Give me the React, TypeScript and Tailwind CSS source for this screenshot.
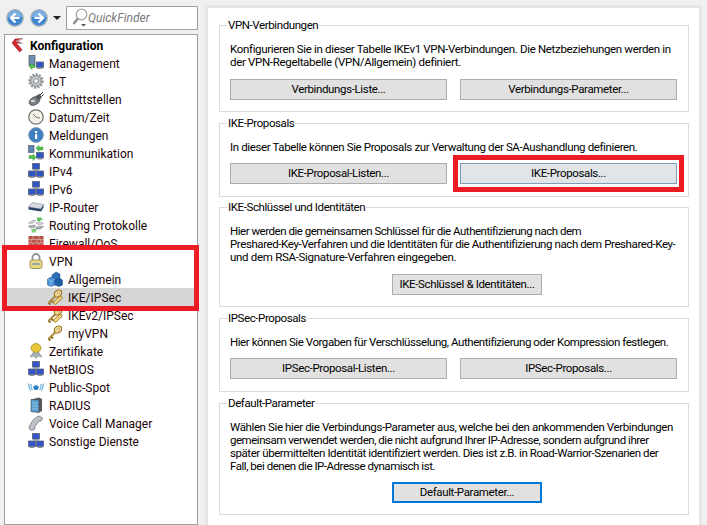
import type { ReactNode } from "react";

// =============================================================================
// Tree icons, 16x16 drawings
// =============================================================================
function Svg({ children, size = 16 }: { children: ReactNode; size?: number }) {
  return (
    <svg width={size} height={size} viewBox="0 0 16 16" className="shrink-0">
      {children}
    </svg>
  );
}

function Pc({ x, y }: { x: number; y: number }) {
  return (
    <g>
      <rect x={x} y={y} width="7" height="5.5" fill="#2f55c8" stroke="#5a6472" strokeWidth="0.8" />
      <rect x={x + 1} y={y + 5.5} width="5" height="1.5" fill="#8a929c" />
    </g>
  );
}

const Network = () => (
  <Svg>
    <Pc x={4.5} y={0.5} />
    <Pc x={0.5} y={8} />
    <Pc x={8.5} y={8} />
  </Svg>
);

const Management = () => (
  <Svg>
    <rect x="1" y="0.5" width="6" height="10" fill="#6f8fb5" stroke="#55606e" strokeWidth="0.8" />
    <Pc x={8.5} y={7} />
    <path d="M1 11 L4 8.5 L4 10 L7 10 L7 12.5 L4 12.5 L4 14.5 Z" fill="#4fc04a" stroke="#2f8a2f" strokeWidth="0.5" />
  </Svg>
);

const Gear = () => (
  <Svg>
    <circle cx="8" cy="8" r="5.4" fill="#c3c6ca" stroke="#7d8288" strokeWidth="1" />
    <circle cx="8" cy="8" r="6.6" fill="none" stroke="#8d9298" strokeWidth="2.2" strokeDasharray="2 1.4" />
    <circle cx="8" cy="8" r="2.4" fill="#f2f3f4" stroke="#777c82" strokeWidth="0.8" />
  </Svg>
);

const Plug = () => (
  <Svg>
    <ellipse cx="6.5" cy="10" rx="5.8" ry="3.8" fill="#7b7f84" stroke="#45484c" strokeWidth="0.7" transform="rotate(-30 6.5 10)" />
    <rect x="8" y="4" width="5" height="4.5" fill="#55595e" transform="rotate(-30 10 6)" />
    <path d="M12 4 L15 1 M13.5 5.5 L15.5 3.5" stroke="#222" strokeWidth="1" />
    <ellipse cx="5" cy="10" rx="2.2" ry="1.3" fill="#d2d4d6" />
  </Svg>
);

const Clock = () => (
  <Svg>
    <circle cx="8" cy="8" r="7.2" fill="#f3f1ea" stroke="#6e6e68" strokeWidth="1.2" />
    <path d="M8 8 L5 5 M8 8 L12 9" stroke="#77776f" strokeWidth="1" fill="none" />
  </Svg>
);

const Info = () => (
  <Svg>
    <circle cx="8" cy="8" r="7.4" fill="#3f7fc4" stroke="#8aa0b4" strokeWidth="1" />
    <rect x="7" y="7" width="2.2" height="5" fill="#fff" />
    <rect x="7" y="4" width="2.2" height="2" fill="#fff" />
  </Svg>
);

const Kommunikation = () => (
  <Svg>
    <rect x="0.5" y="0.5" width="5.5" height="7" fill="#5f84b4" stroke="#55606e" strokeWidth="0.7" />
    <Pc x={8.5} y={7.5} />
    <path d="M8 3 L11 0.5 L11 2 L15 2 L15 5 L11 5 L11 6.5 Z" fill="#4fc04a" stroke="#2f8a2f" strokeWidth="0.4" />
    <path d="M8 12.5 L5 9 L5 10.5 L1 10.5 L1 13.5 L5 13.5 L5 15.5 Z" fill="#4fc04a" stroke="#2f8a2f" strokeWidth="0.4" />
  </Svg>
);

const Router = () => (
  <Svg>
    <path d="M0.5 8 L4 3.5 L15.5 5.5 L13 10 Z" fill="#d6dade" stroke="#8a9096" strokeWidth="0.6" />
    <path d="M0.5 8 L13 10 L15.5 5.5 L15.5 8.5 L13 12.5 L0.5 10.5 Z" fill="#27416b" />
  </Svg>
);

const Routing = () => (
  <Svg>
    <path d="M0.5 6 L5 3 L8 3.5 L4 6.5 Z M8 6 L13 5 L15.5 6.5 L11 8 Z" fill="#d3d7da" stroke="#8b9095" strokeWidth="0.5" />
    <path d="M0.5 9 L7 8 L7 10 L2 11 Z M8 10 L15.5 9 L13 12 L8 12 Z" fill="#aeb3b8" stroke="#777" strokeWidth="0.5" />
    <path d="M9 0.5 L13 0.5 L15 3 L13 3 L11 5 L9 3 Z" fill="#5cc05a" />
    <path d="M3 12 L7 11.5 L9 13 L7 15.5 L4 15.5 Z" fill="#7ed07a" />
  </Svg>
);

const Firewall = () => (
  <Svg>
    <rect x="0.5" y="1" width="15" height="14" fill="#b8534a" />
    <path d="M0.5 4.5 H15.5 M0.5 8 H15.5 M0.5 11.5 H15.5 M5 1 V4.5 M11 1 V4.5 M3 4.5 V8 M9 4.5 V8 M13 4.5 V8 M5 8 V11.5 M11 8 V11.5 M3 11.5 V15 M9 11.5 V15" stroke="#d9a9a0" strokeWidth="0.8" />
  </Svg>
);

const Lock = () => (
  <Svg>
    <path d="M4.5 7 V4.5 A3.5 3.5 0 0 1 11.5 4.5 V7" fill="none" stroke="#8e949a" strokeWidth="1.8" />
    <rect x="2" y="7" width="12" height="8.5" rx="1.5" fill="#e6dc7c" stroke="#8a8450" strokeWidth="0.8" />
    <rect x="4" y="10" width="8" height="2" rx="1" fill="#9b9db0" />
  </Svg>
);

const Cubes = () => (
  <Svg>
    <path d="M5 4 L9 1 L13 3 L13 9 L5 9 Z" fill="#2f6fb8" stroke="#1d4d8c" strokeWidth="0.5" />
    <path d="M0.5 8 L4 6 L8 8 L8 14 L4 15.5 L0.5 14 Z" fill="#4b93d8" stroke="#1d4d8c" strokeWidth="0.5" />
    <path d="M8 9 L12 7 L15.5 9 L15.5 14 L12 15.5 L8 14 Z" fill="#1f5ca6" stroke="#1d4d8c" strokeWidth="0.5" />
    <path d="M0.5 8 L4 10 L4 15.5 M8 8 L4 10" stroke="#a8d4f4" strokeWidth="0.6" fill="none" />
  </Svg>
);

const Key = ({ double }: { double?: boolean }) => (
  <Svg>
    {double && <path d="M13.5 6.5 L6 13.5 L8.5 15.5 L15.5 9 Z" fill="#f0d078" stroke="#8d6a1e" strokeWidth="0.8" />}
    <ellipse cx="11" cy="4.5" rx="4" ry="3.2" fill="#f3dc92" stroke="#8d6a1e" strokeWidth="1.1" transform="rotate(-40 11 4.5)" />
    <circle cx="11.5" cy="4" r="1" fill="#fff" stroke="#8d6a1e" strokeWidth="0.5" />
    <path d="M8.5 7 L1.5 14 M1.5 14 L3.5 15.5 M4 11.5 L6 13.5" stroke="#8d6a1e" strokeWidth="1.8" fill="none" />
    <path d="M8.5 7 L1.5 14" stroke="#f0d078" strokeWidth="0.7" />
  </Svg>
);

const Zertifikat = () => (
  <Svg>
    <path d="M2 14 L5.5 9 L8 11 L10.5 9 L14 14 L10 13 L8 15.5 L6 13 Z" fill="#a8b0b8" stroke="#70777e" strokeWidth="0.5" />
    <ellipse cx="8" cy="5" rx="5" ry="4.4" fill="#e8c838" stroke="#a08a20" strokeWidth="0.8" />
  </Svg>
);

const PublicSpot = () => (
  <Svg>
    <path d="M5 8 A3.4 3.4 0 0 1 11 8 L9.5 11 L6.5 11 Z" fill="#2f7fc8" />
    <path d="M3.4 5 Q2 8 4.5 11 M1 4.5 Q0.2 8 2.6 12 M12.6 5 Q14 8 11.5 11 M15 4.5 Q15.8 8 13.4 12" stroke="#6fb0e0" strokeWidth="1.2" fill="none" />
  </Svg>
);

const Radius = () => (
  <Svg>
    <path d="M3 2.5 L11 0.5 L14 2 L14 14 L11 15.5 L3 14.5 Z" fill="#55595e" />
    <path d="M3 2.5 L11 3 L11 15.5 L3 14.5 Z" fill="#5aa0d0" stroke="#3e4246" strokeWidth="0.6" />
    <path d="M4 6 H10 M4 9 H10 M4 12 H10" stroke="#9ccbe8" strokeWidth="0.8" />
  </Svg>
);

const Phone = () => (
  <Svg>
    <path d="M11 1 L14.5 3 L13 6 L11 6 L6.5 12 L7 14 L3.5 15.5 L1 13.5 C2 8 6 3 11 1 Z" fill="#bcc2c8" stroke="#6c7278" strokeWidth="0.8" />
  </Svg>
);

const ConfigArrow = () => (
  <svg width="13" height="16" viewBox="0 0 13 16" className="shrink-0">
    <path d="M1 6 L4 2 L12 1.5 L6 4.5 L12 6.5 L6 6.5 L11 13 L8.5 15 Z" fill="#d4252c" stroke="#8c1a1e" strokeWidth="0.5" />
    <path d="M5 4.5 L12 1.5 M6 6.5 L12 6.5" stroke="#b9b9b9" strokeWidth="1.1" />
  </svg>
);

// =============================================================================
// Toolbar bits
// =============================================================================
function NavButton({ dir }: { dir: "back" | "forward" }) {
  return (
    <svg width="18" height="18" viewBox="0 0 18 18" className="shrink-0">
      <circle cx="9" cy="9" r="8.2" fill="#3f86d0" stroke="#a9b4be" strokeWidth="1.4" />
      <path d="M2 8 A7 6 0 0 1 16 8 Z" fill="#7db2e6" />
      <path
        d={dir === "back" ? "M9.5 4.5 L5 9 L9.5 13.5 M5.5 9 H13.5" : "M8.5 4.5 L13 9 L8.5 13.5 M12.5 9 H4.5"}
        stroke="#fff"
        strokeWidth="2.2"
        fill="none"
      />
    </svg>
  );
}

const Magnifier = () => (
  <svg width="16" height="20" viewBox="0 0 16 20" className="shrink-0">
    <circle cx="9.5" cy="6.5" r="5.3" fill="#fff" stroke="#a6a6a6" strokeWidth="1.3" />
    <path d="M5.8 10.5 L1.5 16" stroke="#8c8c8c" strokeWidth="2.2" />
    <path d="M9 16 H14 L11.5 18.5 Z" fill="#555" />
  </svg>
);

// =============================================================================
// Tree data
// =============================================================================
const TREE: { label: string; icon: ReactNode; level?: number; selected?: boolean }[] = [
  { label: "Management", icon: <Management /> },
  { label: "IoT", icon: <Gear /> },
  { label: "Schnittstellen", icon: <Plug /> },
  { label: "Datum/Zeit", icon: <Clock /> },
  { label: "Meldungen", icon: <Info /> },
  { label: "Kommunikation", icon: <Kommunikation /> },
  { label: "IPv4", icon: <Network /> },
  { label: "IPv6", icon: <Network /> },
  { label: "IP-Router", icon: <Router /> },
  { label: "Routing Protokolle", icon: <Routing /> },
  { label: "Firewall/QoS", icon: <Firewall /> },
  { label: "VPN", icon: <Lock /> },
  { label: "Allgemein", icon: <Cubes />, level: 2 },
  { label: "IKE/IPSec", icon: <Key double />, level: 2, selected: true },
  { label: "IKEv2/IPSec", icon: <Key double />, level: 2 },
  { label: "myVPN", icon: <Key />, level: 2 },
  { label: "Zertifikate", icon: <Zertifikat /> },
  { label: "NetBIOS", icon: <Network /> },
  { label: "Public-Spot", icon: <PublicSpot /> },
  { label: "RADIUS", icon: <Radius /> },
  { label: "Voice Call Manager", icon: <Phone /> },
  { label: "Sonstige Dienste", icon: <Network /> },
];

// =============================================================================
// Right pane pieces
// =============================================================================
type Line = { text: string; fit: string };

function Group({
  title,
  lines,
  className,
  children,
}: {
  title: string;
  lines: Line[];
  className: string;
  children: ReactNode;
}) {
  return (
    <div className={`relative border border-[#dcdcdc] pl-[10px] pr-[10px] pt-[17px] ${className}`}>
      <span className="absolute left-[7px] top-[-8px] bg-white px-[1px] leading-[14px] tracking-[-0.4px]">{title}</span>
      <div className="leading-[13px] whitespace-nowrap">
        {lines.map((l) => (
          <div key={l.text} className={l.fit}>
            {l.text}
          </div>
        ))}
      </div>
      {children}
    </div>
  );
}

function Btn({ label, className = "w-[217px]", focus }: { label: string; className?: string; focus?: boolean }) {
  return (
    <button
      className={`h-[21px] whitespace-nowrap bg-[#e1e1e1] text-center leading-none tracking-[-0.36px] ${
        focus ? "border-2 border-[#0078d7]" : "border border-[#adadad]"
      } ${className}`}
    >
      {label}
    </button>
  );
}

export default function App() {
  return (
    <div className="relative flex h-[525px] w-[707px] overflow-hidden bg-[#f0f0f0] font-['Roboto',sans-serif] text-[11.5px] text-black">
      {/* Left column */}
      <div className="ml-[4px] flex w-[194px] flex-col text-[12px]">
        <div className="flex h-[30px] items-center pl-[2px] pt-[6px]">
          <NavButton dir="back" />
          <div className="w-[6px]" />
          <NavButton dir="forward" />
          <div className="ml-[5px] h-0 w-0 border-x-[4px] border-t-[4px] border-x-transparent border-t-[#222]" />
          <div className="ml-[5px] flex h-[24px] flex-1 items-center border border-[#a0a0a0] bg-white pl-[5px]">
            <Magnifier />
            <span className="italic text-[#7a7a7a]">QuickFinder</span>
          </div>
        </div>
        <div className="mt-[4px] flex-1 border border-[#a0a0a0] bg-white pt-[1px]">
          <div className="flex h-[18px] items-center pl-[6px]">
            <ConfigArrow />
            <span className="ml-[6px] pt-[1px] font-bold">Konfiguration</span>
          </div>
          {TREE.map((row) => (
            <div
              key={row.label}
              className={`flex h-[18px] items-center gap-[5px] whitespace-nowrap text-[#1c0408] ${
                row.level === 2 ? "pl-[42px]" : "pl-[23px]"
              } ${row.selected ? "bg-[#d6d6d6]" : ""}`}
            >
              {row.icon}
              <span className="pt-[1px]">{row.label}</span>
            </div>
          ))}
        </div>
      </div>

      {/* Right panel */}
      <div className="ml-[7px] mt-[5px] h-[520px] w-[497px] border-[3px] border-b-0 border-[#e6e6e6] bg-white pl-[11px] pt-[17px]">
        <div className="flex w-[470px] flex-col">
          <Group
            title="VPN-Verbindungen"
            className="h-[87px]"
            lines={[
              {
                text: "Konfigurieren Sie in dieser Tabelle IKEv1 VPN-Verbindungen. Die Netzbeziehungen werden in",
                fit: "tracking-[-0.33px]",
              },
              { text: "der VPN-Regeltabelle (VPN/Allgemein) definiert.", fit: "tracking-[-0.32px]" },
            ]}
          >
            <div className="mt-[10px] flex gap-[13px]">
              <Btn label="Verbindungs-Liste..." />
              <Btn label="Verbindungs-Parameter..." />
            </div>
          </Group>
          <Group
            title="IKE-Proposals"
            className="mt-[11px] h-[74px]"
            lines={[
              {
                text: "In dieser Tabelle können Sie Proposals zur Verwaltung der SA-Aushandlung definieren.",
                fit: "tracking-[-0.38px]",
              },
            ]}
          >
            <div className="mt-[9px] flex gap-[13px]">
              <Btn label="IKE-Proposal-Listen..." />
              <Btn label="IKE-Proposals..." className="w-[217px] !border-[#7f9db9] !bg-[#e1e5e8]" />
            </div>
          </Group>
          <Group
            title="IKE-Schlüssel und Identitäten"
            className="mt-[10px] h-[100px]"
            lines={[
              {
                text: "Hier werden die gemeinsamen Schlüssel für die Authentifizierung nach dem",
                fit: "tracking-[-0.48px]",
              },
              {
                text: "Preshared-Key-Verfahren und die Identitäten für die Authentifizierung nach dem Preshared-Key-",
                fit: "tracking-[-0.41px]",
              },
              { text: "und dem RSA-Signature-Verfahren eingegeben.", fit: "tracking-[-0.3px]" },
            ]}
          >
            <div className="mt-[10px] flex pl-[162px]">
              <Btn label="IKE-Schlüssel & Identitäten..." className="w-[150px]" />
            </div>
          </Group>
          <Group
            title="IPSec-Proposals"
            className="mt-[11px] h-[74px]"
            lines={[
              {
                text: "Hier können Sie Vorgaben für Verschlüsselung, Authentifizierung oder Kompression festlegen.",
                fit: "tracking-[-0.44px]",
              },
            ]}
          >
            <div className="mt-[9px] flex gap-[13px]">
              <Btn label="IPSec-Proposal-Listen..." />
              <Btn label="IPSec-Proposals..." />
            </div>
          </Group>
          <Group
            title="Default-Parameter"
            className="mt-[11px] h-[112px]"
            lines={[
              {
                text: "Wählen Sie hier die Verbindungs-Parameter aus, welche bei den ankommenden Verbindungen",
                fit: "tracking-[-0.38px]",
              },
              {
                text: "gemeinsam verwendet werden, die nicht aufgrund Ihrer IP-Adresse, sondern aufgrund ihrer",
                fit: "tracking-[-0.47px]",
              },
              {
                text: "später übermittelten Identität identifiziert werden. Dies ist z.B. in Road-Warrior-Szenarien der",
                fit: "tracking-[-0.43px]",
              },
              { text: "Fall, bei denen die IP-Adresse dynamisch ist.", fit: "tracking-[-0.47px]" },
            ]}
          >
            <div className="mt-[9px] flex pl-[162px]">
              <Btn label="Default-Parameter..." className="w-[150px]" focus />
            </div>
          </Group>
        </div>
      </div>

      {/* Red annotation frames */}
      <div className="absolute left-[2px] top-[245px] h-[66px] w-[197px] border-[5px] border-[#ed1c24]" />
      <div className="absolute left-[453px] top-[155px] h-[37px] w-[231px] border-[5px] border-[#ed1c24]" />
    </div>
  );
}
